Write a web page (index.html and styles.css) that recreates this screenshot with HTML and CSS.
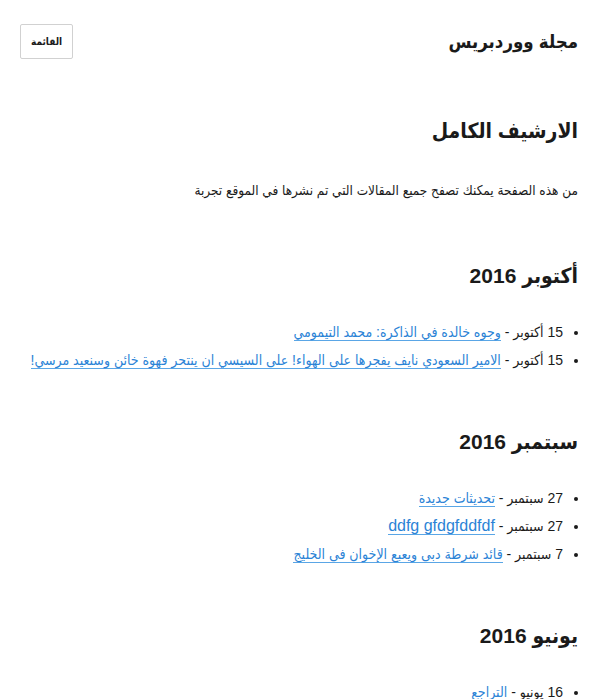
FILE: index.html
```html
<!DOCTYPE html>
<html lang="ar" dir="rtl">
<head>
  <meta charset="utf-8">
  <title>الارشيف الكامل - مجلة ووردبريس</title>
  <link rel="stylesheet" href="styles.css">
</head>
<body>
  <header class="site-header">
    <div class="site-title">مجلة ووردبريس</div>
    <button class="menu-toggle">القائمة</button>
  </header>

  <main class="content">
    <h1 class="page-title">الارشيف الكامل</h1>
    <p class="intro">من هذه الصفحة يمكنك تصفح جميع المقالات التي تم نشرها في الموقع تجربة</p>

    <section class="archive-month">
      <h2>أكتوبر 2016</h2>
      <ul>
        <li>15 أكتوبر - <a href="#">وجوه خالدة في الذاكرة: محمد التيمومي</a></li>
        <li>15 أكتوبر - <a href="#">الامير السعودي نايف يفجرها على الهواء! على السيسي ان ينتحر فهوة خائن وسنعيد مرسي!</a></li>
      </ul>
    </section>

    <section class="archive-month">
      <h2>سبتمبر 2016</h2>
      <ul>
        <li>27 سبتمبر - <a href="#">تحديثات جديدة</a></li>
        <li>27 سبتمبر - <a href="#" class="latin">ddfg gfdgfddfdf</a></li>
        <li>7 سبتمبر - <a href="#">قائد شرطة دبى ويعبع الإخوان فى الخليج</a></li>
      </ul>
    </section>

    <section class="archive-month">
      <h2>يونيو 2016</h2>
      <ul>
        <li>16 يونيو - <a href="#">التراجع</a></li>
      </ul>
    </section>
  </main>
</body>
</html>
```

FILE: styles.css
```css
body {
  margin: 0;
  padding: 0;
  background-color: #ffffff;
  color: #1a1a1a;
  font-family: "Liberation Sans", "DejaVu Sans Condensed", sans-serif;
  font-size: 14px;
}

.site-header {
  display: flex;
  justify-content: space-between;
  align-items: center;
  padding: 24px 28px 0 20px;
}

.site-title {
  font-size: 18.5px;
  font-weight: bold;
  color: #1a1a1a;
}

.menu-toggle {
  background-color: #ffffff;
  border: 1px solid #d1d1d1;
  border-radius: 2px;
  padding: 0 10px;
  height: 35px;
  font-family: inherit;
  font-size: 10px;
  font-weight: bold;
  color: #1a1a1a;
  cursor: pointer;
}

.content {
  padding: 0 28px;
}

.page-title {
  font-size: 21px;
  margin: 60px 0 0;
}

.intro {
  margin: 38px 0 0;
  padding-bottom: 7px;
  line-height: 1.5;
  font-size: 13.5px;
}

.archive-month h2 {
  font-size: 21px;
  margin: 56px 0 0;
}

.archive-month ul {
  margin: 30px 0 0;
  padding: 0 15px 0 0;
  line-height: 28px;
  font-size: 14px;
}

.archive-month a {
  color: #2b83d6;
  text-decoration: none;
  border-bottom: 1px solid #5aa6e6;
}

.archive-month .latin {
  font-size: 16px;
}
```
